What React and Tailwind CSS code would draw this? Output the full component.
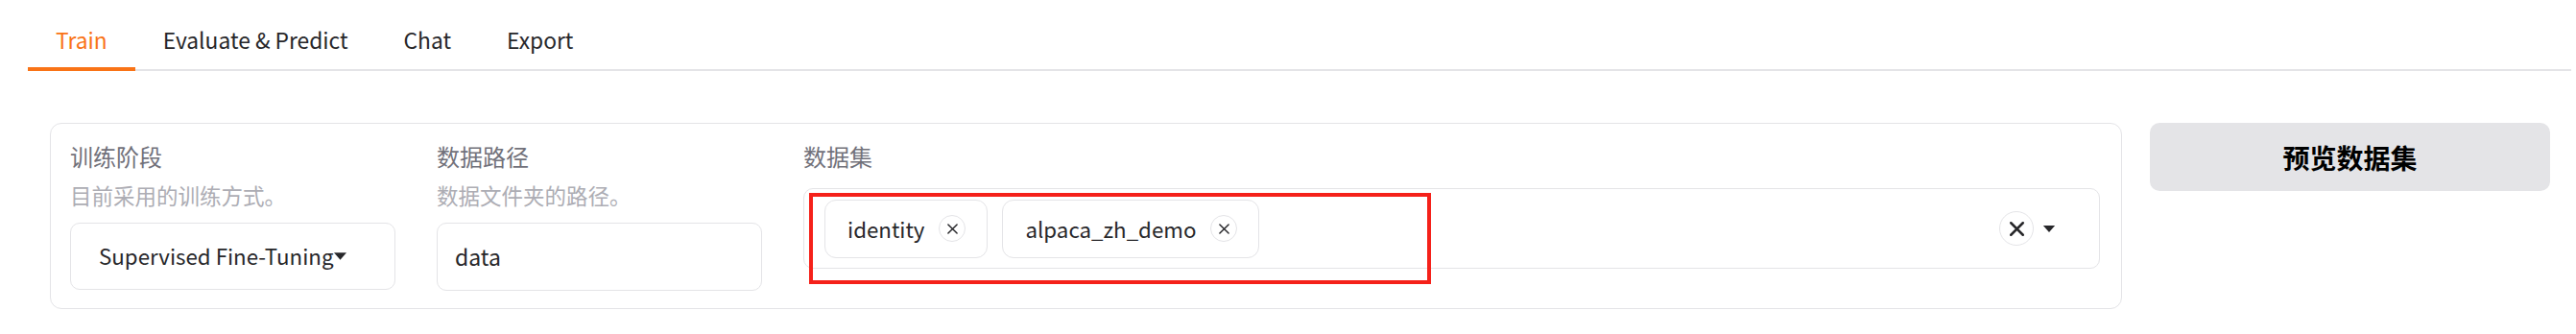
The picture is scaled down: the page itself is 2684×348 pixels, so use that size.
import React from "react";

const tabs = ["Train", "Evaluate & Predict", "Chat", "Export"];

function Caret({ className }) {
  return (
    <svg className={className} viewBox="0 0 14 8" fill="currentColor">
      <path d="M0 0 L14 0 L7 8 Z" />
    </svg>
  );
}

function Cross({ size, stroke }) {
  return (
    <svg width={size} height={size} viewBox="0 0 12 12" fill="none" stroke="currentColor" strokeWidth={stroke} strokeLinecap="round">
      <path d="M1 1 L11 11 M11 1 L1 11" />
    </svg>
  );
}

function Chip({ label }) {
  return (
    <div className="flex items-center h-[61px] pl-[23px] pr-[22px] border border-[#e4e4e7] rounded-[12px] bg-white">
      <span className="text-[22.3px] leading-[34px] text-[#27272a]">{label}</span>
      <span className="ml-[15px] w-[28px] h-[28px] rounded-full border border-[#e4e4e7] flex items-center justify-center text-[#27272a]">
        <Cross size={11} stroke={1.6} />
      </span>
    </div>
  );
}

function Field({ label, info, children }) {
  return (
    <div className="flex flex-col">
      <span className="text-[24px] leading-[34px] text-[#71717a]">{label}</span>
      {info && <span className="mt-[8px] text-[22.5px] leading-[30px] text-[#adadb4]">{info}</span>}
      <div className={info ? "mt-[14px]" : "mt-[16px]"}>{children}</div>
    </div>
  );
}

export default function App() {
  return (
    <div className="relative w-[2684px] h-[348px] bg-white font-['Noto_Sans_CJK_SC','Noto_Sans',sans-serif] overflow-hidden">
      {/* tabs */}
      <div className="pl-[29px] pr-[5px] pt-[25px]">
        <div className="flex border-b-2 border-[#e4e4e7]">
          {tabs.map((t, i) => (
            <button
              key={t}
              className={`-mb-[2px] px-[29px] pb-[11px] border-b-4 text-[22.8px] leading-[34px] ${
                i === 0 ? "border-[#f97316] text-[#f97316]" : "border-transparent text-[#27272a]"
              }`}
            >
              {t}
            </button>
          ))}
        </div>
      </div>

      {/* content */}
      <div className="flex gap-[29px] mt-[54px] pl-[52px] pr-[27px]">
        <div className="flex-1 h-[194px] border border-[#e4e4e7] rounded-[12px] pl-[20px] pr-[22px] pt-[17px] flex gap-[43px]">
          <div className="w-[339px]">
            <Field label="训练阶段" info="目前采用的训练方式。">
              <div className="h-[70px] border border-[#e4e4e7] rounded-[10px] flex items-center pl-[29px] text-[22.3px] text-[#27272a] whitespace-nowrap">
                <span>Supervised Fine-Tuning</span>
                <Caret className="w-[13px] h-[8px] text-[#27272a]" />
              </div>
            </Field>
          </div>
          <div className="w-[339px]">
            <Field label="数据路径" info="数据文件夹的路径。">
              <div className="h-[71px] border border-[#e4e4e7] rounded-[10px] flex items-center pl-[18px] text-[23px] text-[#27272a]">
                data
              </div>
            </Field>
          </div>
          <div className="flex-1">
            <Field label="数据集">
              <div className="h-[84px] border border-[#e4e4e7] rounded-[10px] flex items-center pl-[21px] pr-[45px]">
                <div className="flex gap-[15px] flex-1">
                  <Chip label="identity" />
                  <Chip label="alpaca_zh_demo" />
                </div>
                <span className="w-[36px] h-[36px] rounded-full border border-[#e4e4e7] flex items-center justify-center text-[#27272a]">
                  <Cross size={15} stroke={2} />
                </span>
                <Caret className="ml-[9px] w-[14px] h-[7px] text-[#27272a]" />
              </div>
            </Field>
          </div>
        </div>
        <button className="w-[417px] h-[71px] rounded-[10px] bg-[#e4e4e7] text-[28px] font-bold text-black">
          预览数据集
        </button>
      </div>

      {/* annotation */}
      <div className="absolute left-[843px] top-[201px] w-[648px] h-[95px] border-[4px] border-[#f5211a]" />
    </div>
  );
}
